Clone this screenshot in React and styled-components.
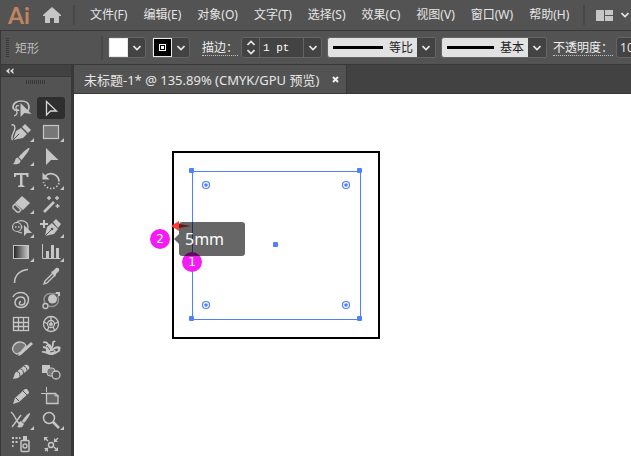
import React from 'react'
import styled, { createGlobalStyle } from 'styled-components'

const GlobalStyle = createGlobalStyle`
  * {
    box-sizing: border-box;
  }
  body {
    margin: 0;
    background: #535353;
    font-family: 'Noto Sans', 'Noto Sans CJK SC', sans-serif;
    font-size: 12px;
    color: #e6e6e6;
  }
  button, input, select {
    font: inherit;
    color: inherit;
    margin: 0;
    padding: 0;
    border: 0;
    background: none;
  }
`

const menus = ['文件(F)', '编辑(E)', '对象(O)', '文字(T)', '选择(S)', '效果(C)', '视图(V)', '窗口(W)', '帮助(H)']

const C = '#c6c6c6'

const Nib = () => (
  <>
    <path d="M8 19l2-9 5-4 6 6-4 5z" fill={C} />
    <path d="M16 5l3-3 5 5-3 4z" fill={C} />
    <path d="M8 19l6-6" stroke="#535353" />
    <circle cx="15" cy="12" r="1.3" fill="#535353" />
  </>
)

const tools = [
  {
    name: '套索工具',
    art: (
      <>
        <path d="M12 13c-3 1-6 0-6-3 0-4 4-6 8-6 5 0 8 2 8 6 0 2-1 4-2 5" fill="none" stroke={C} strokeWidth="1.700" />
        <path d="M12 9c-2-1-3 0-3 2s2 3 3 2M9 13c2 3 1 5-2 6" fill="none" stroke={C} strokeWidth="1.300" />
        <path d="M13.500 6v14l4-4 7 1z" fill={C} />
      </>
    ),
  },
  {
    name: '直接选择工具',
    active: true,
    art: <path d="M9.500 4.500v13.500l4-4h6z" fill="none" stroke="#d8d8d8" strokeWidth="1.300" />,
  },
  {
    name: '曲率工具',
    flag: true,
    art: (
      <>
        <path d="M6 19l3-9 5-3 6 6-4 4z" fill={C} />
        <path d="M15 6l3-3 6 6-3 3z" fill={C} />
        <path d="M6 19l6-6" stroke="#535353" />
        <path d="M4.500 4c3-1 4 2 3 5s-4 7-2 10" fill="none" stroke={C} strokeWidth="1.400" />
      </>
    ),
  },
  {
    name: '矩形工具',
    flag: true,
    art: <rect x="6.500" y="4.500" width="15" height="13" fill="#777" stroke={C} strokeWidth="1.200" />,
  },
  {
    name: '画笔工具',
    flag: true,
    art: (
      <>
        <path d="M22.500 3c1 1-6 10-8 12l-3-3c2-2 9-10 11-9z" fill={C} />
        <path d="M10.500 12.500l3 3c0 4-4 4-8 3.500 3-1 2-6 5-6.500z" fill={C} />
      </>
    ),
  },
  { name: '选择工具', art: <path d="M9 3v17l5-5h7.500z" fill={C} /> },
  {
    name: '文字工具',
    flag: true,
    art: <path d="M7 4h14.500v4h-1.500l-1-2h-3.500v10l2 1v1h-6.500v-1l2-1v-10h-3.500l-1 2h-1.500z" fill={C} />,
  },
  {
    name: '旋转工具',
    flag: true,
    art: (
      <>
        <path d="M8 7.500a8 8 0 0 1 14 5" fill="none" stroke={C} strokeWidth="1.800" />
        <path d="M5.500 3.500v7h7z" fill={C} />
        <path d="M22 14a8 8 0 0 1-15.500-1" fill="none" stroke={C} strokeWidth="1.600" strokeDasharray="1.500 1.800" />
      </>
    ),
  },
  {
    name: '橡皮擦工具',
    flag: true,
    art: (
      <>
        <path d="M15 3l8 7-7 7-8-7z" fill={C} />
        <path d="M8 11l6 6-2 2h-2l-4-4v-2z" fill="none" stroke={C} strokeWidth="1.400" />
      </>
    ),
  },
  {
    name: '魔棒工具',
    art: (
      <>
        <path d="M7 19l10-10" stroke={C} strokeWidth="2.600" />
        <path d="M12 3v4M10 5h4M20 3v4M18 5h4M20.500 11v4M18.500 13h4" stroke={C} strokeWidth="1.400" />
      </>
    ),
  },
  {
    name: '形状生成器工具',
    flag: true,
    art: (
      <>
        <circle cx="10" cy="10" r="4.500" fill="none" stroke={C} strokeWidth="1.200" />
        <path d="M9 6c3-4 12-3 12 4 0 1 0 2-1 3M11 15l4 1" fill="none" stroke={C} strokeWidth="1.200" />
        <path d="M8 10h9" stroke={C} strokeWidth="1.500" strokeDasharray="1.500 1.500" />
        <path d="M17 8v11l3-3h5z" fill={C} />
      </>
    ),
  },
  {
    name: '添加锚点工具',
    flag: true,
    art: (
      <>
        <path d="M7 3v8M3 7h8" stroke={C} strokeWidth="2" />
        <Nib />
      </>
    ),
  },
  {
    name: '渐变工具',
    flag: true,
    art: (
      <>
        <defs>
          <linearGradient id="ramp">
            <stop offset="0" stopColor="#222" />
            <stop offset="1" stopColor="#ccc" />
          </linearGradient>
        </defs>
        <rect x="6.500" y="4.500" width="15" height="13" fill="url(#ramp)" stroke={C} />
      </>
    ),
  },
  {
    name: '柱形图工具',
    flag: true,
    art: (
      <>
        <path d="M5.500 3v14.500h18" fill="none" stroke={C} />
        <path d="M9 10h3v7h-3zM14 4h3v13h-3zM19 7h3v10h-3z" fill={C} />
      </>
    ),
  },
  { name: '弧形工具', art: <path d="M7.500 18c0-7 5-13 13.500-13.500" fill="none" stroke={C} strokeWidth="1.500" /> },
  {
    name: '吸管工具',
    art: (
      <>
        <path d="M8 16l8-8 2 2-8 8-3 1z" fill="none" stroke={C} strokeWidth="1.400" />
        <path d="M14 7l2-1 3-3c2-1 4 1 3 3l-3 3-1 3z" fill={C} />
      </>
    ),
  },
  {
    name: '螺旋线工具',
    art: (
      <path
        d="M6 8c1-3 5-4.500 8-4.500 4 0 7.500 3 7.500 7 0 5-3.500 8-7.500 8-3.500 0-6-2-6-5s2.500-5.500 5.500-5.500 4.500 2 4.500 4.500-2 3.500-4 3.500-2.500-3 0-3.500"
        fill="none"
        stroke={C}
        strokeWidth="1.500"
      />
    ),
  },
  {
    name: '符号移位器工具',
    art: (
      <>
        <path d="M8 14c-3-6 2-11 8-9l6-1-1 4c2 7-4 11-9 9" fill="none" stroke="#929292" strokeWidth="1.500" />
        <circle cx="15.500" cy="10" r="4.500" fill={C} />
        <circle cx="8.500" cy="17" r="2.500" fill="#535353" stroke={C} strokeWidth="1.300" />
        <path d="M19 3h4v4h-2v-2h-2z" fill={C} />
      </>
    ),
  },
  {
    name: '矩形网格工具',
    art: (
      <>
        <rect x="6.500" y="4.500" width="15" height="13" fill="none" stroke={C} strokeWidth="1.300" />
        <path d="M11.500 5v13M16.500 5v13M6.500 9.500h15M6.500 13.500h15" stroke={C} strokeWidth="1.300" />
      </>
    ),
  },
  {
    name: '极坐标网格工具',
    art: (
      <g fill="none" stroke={C} strokeWidth="1.300">
        <circle cx="14" cy="11" r="7.500" />
        <circle cx="14" cy="11" r="3.500" />
        <path d="M14 3v5M7 9l4 2M21 9l-4 2M10 18l2-4M18 18l-2-4M12 11h4M13 13l1-4 1 4" />
      </g>
    ),
  },
  {
    name: '斑点画笔工具',
    art: (
      <>
        <path d="M10 17c-4-1-6-5-3-9 4-5 11-3 12 1l-5 6z" fill="#777" stroke={C} strokeWidth="1.300" />
        <path d="M24 5l2 2-12 11-3 1 1-3z" fill={C} />
      </>
    ),
  },
  {
    name: '变形工具',
    art: (
      <>
        <path
          d="M6 5.500c3-1.500 5 1 6 4M6 10c2 0 4 2 7 2 2 0 3-4 3-6 0-1.500 1.500-2 2-1M5 15c4-1 6 3 10 2 3 0 5-2 8-4M16 12c2-1 5-3 7-1"
          fill="none"
          stroke={C}
          strokeWidth="1.800"
        />
        <path d="M9 8l4-1 3 5 3 2-3 4-7-2z" fill={C} />
        <path d="M10 9l3 4M13 15l4-1" stroke="#535353" />
        <circle cx="22" cy="11.500" r="1.500" fill={C} />
      </>
    ),
  },
  {
    name: 'Shaper 工具',
    art: (
      <>
        <path d="M6 18l2-6 10-8c3-1 5 2 4 4l-11 9z" fill={C} />
        <path d="M10 10.500c2 0 3 2 3 5M13.500 8c2 0 3 2 3 5M17 5.500c2 0 3 2 3 4" fill="none" stroke="#535353" />
      </>
    ),
  },
  {
    name: '混合工具',
    art: (
      <>
        <path d="M5 4h8v8h-8z" fill={C} />
        <rect x="10" y="7" width="8" height="8" rx="3" fill="#777" stroke={C} />
        <circle cx="19" cy="14" r="4" fill="#535353" stroke={C} strokeWidth="1.300" />
      </>
    ),
  },
  {
    name: '铅笔工具',
    art: (
      <>
        <path d="M6 19l2-6 10-9h2l2 3v1l-10 9z" fill={C} />
        <path d="M9 13l3 3M16 6l4 4" stroke="#535353" />
      </>
    ),
  },
  {
    name: '画板工具',
    art: (
      <>
        <path d="M9.500 8.500h9l2.500 2.500v7.500h-11.500z" fill="#666" stroke={C} strokeWidth="1.300" />
        <path d="M9.500 2v5M4 8.500h5M18 8v3h4" fill="none" stroke={C} />
      </>
    ),
  },
  {
    name: '剪刀工具',
    flag: true,
    art: (
      <>
        <path d="M4 3c3 2 4 6 6 9l5 6M5 18l9-12" fill="none" stroke={C} strokeWidth="1.400" />
        <path d="M23 4c1 1-4 8-6 10l-2-2c2-3 7-9 8-8zM14 12l3 3c-1 3-4 4-7 3 2-1 1-5 4-6z" fill={C} />
      </>
    ),
  },
  {
    name: '缩放工具',
    flag: true,
    art: (
      <>
        <circle cx="12" cy="9" r="5.500" fill="none" stroke={C} strokeWidth="1.500" />
        <path d="M16 13l6 6" stroke={C} strokeWidth="2.500" />
      </>
    ),
  },
  {
    name: '符号喷枪工具',
    art: (
      <>
        <rect x="14" y="7.500" width="8" height="11" rx="1" fill="none" stroke={C} strokeWidth="1.500" />
        <path d="M16 3h4v4h-4z" fill={C} />
        <circle cx="18" cy="13" r="2" fill="none" stroke={C} strokeWidth="1.300" />
        <path d="M5 4h2v2h-2zM8.500 4h2v2h-2zM12 4h1.500v2h-1.500zM5 8h2v2h-2zM8.500 8h2v2h-2zM5 12h1.500v2h-1.500z" fill={C} />
      </>
    ),
  },
  {
    name: '符号紧缩器工具',
    art: (
      <>
        <circle cx="14" cy="12" r="2.500" fill="none" stroke={C} strokeWidth="1.500" />
        <path d="M11 8l-3-3M17 9l4-4M11 15l-3 3M17 14l3 3" stroke={C} strokeWidth="1.300" />
        <path d="M7 4h4l-4 4zM17 5v4h4zM11 19v-4h-4zM21 14v4h-4z" fill={C} />
      </>
    ),
  },
]

const Chevron = () => (
  <svg width="8" height="6" viewBox="0 0 8 6" aria-hidden="true">
    <path d="M0.500 1l3.500 3.500 3.500-3.500" fill="none" stroke="#e8e8e8" strokeWidth="1.600" />
  </svg>
)

const ToolButton = ({ tool }) => (
  <Tool type="button" aria-label={tool.name} $active={tool.active}>
    <svg width="28" height="22" viewBox="0 0 28 22" aria-hidden="true">
      {tool.art}
      {tool.flag && <path d="M27 17v4h-4z" fill={C} />}
    </svg>
  </Tool>
)

const StrokeSelect = ({ label, value, length }) => (
  <Profile>
    <Sample $length={length} />
    <ProfileSelect aria-label={label}>
      <option>{value}</option>
    </ProfileSelect>
    <ProfileArrow>
      <Chevron />
    </ProfileArrow>
  </Profile>
)

const App = () => {
  return (
    <Page>
      <GlobalStyle />
      <MenuBar>
        <Logo>Ai</Logo>
        <IconButton type="button" aria-label="主页">
          <svg width="18" height="16" viewBox="0 0 18 16" aria-hidden="true">
            <path d="M9 0l9 8v1h-2v7h-5v-5h-4v5h-5v-7h-2v-1z" fill={C} />
          </svg>
        </IconButton>
        <Divider />
        <Menus>
          {menus.map((m) => (
            <MenuItem type="button" key={m}>{m}</MenuItem>
          ))}
        </Menus>
        <Divider />
        <IconButton type="button" aria-label="排列文档">
          <svg width="17" height="11" viewBox="0 0 17 11" aria-hidden="true">
            <path d="M0 0h8v11h-8zM9 0h8v5h-8zM9 6h8v5h-8z" fill={C} />
          </svg>
          <Chevron />
        </IconButton>
      </MenuBar>

      <ControlBar>
        <SideGrip />
        <Target>矩形</Target>
        <ShortDivider />
        <Swatches>
          <SwatchButton type="button" aria-label="填色">
            <Fill />
            <ArrowCell><Chevron /></ArrowCell>
          </SwatchButton>
          <SwatchButton type="button" aria-label="描边颜色">
            <Fill $dark>
              <svg width="7" height="7" viewBox="0 0 7 7" aria-hidden="true">
                <rect x="0.500" y="0.500" width="6" height="6" fill="none" stroke="#fff" />
                <rect x="2" y="2" width="3" height="3" fill="#fff" />
              </svg>
            </Fill>
            <ArrowCell><Chevron /></ArrowCell>
          </SwatchButton>
        </Swatches>
        <Field>
          <Caption htmlFor="weight">描边：</Caption>
          <Weight>
            <Stepper>
              <button type="button" aria-label="增加">
                <svg width="8" height="6" viewBox="0 0 8 6" aria-hidden="true">
                  <path d="M0.500 5l3.500-3.500 3.500 3.500" fill="none" stroke="#e8e8e8" strokeWidth="1.600" />
                </svg>
              </button>
              <button type="button" aria-label="减少"><Chevron /></button>
            </Stepper>
            <WeightInput id="weight" type="text" defaultValue="1 pt" />
            <ArrowButton type="button" aria-label="描边粗细"><Chevron /></ArrowButton>
          </Weight>
        </Field>
        <Profiles>
          <StrokeSelect label="变量宽度配置文件" value="等比" length={50} />
          <StrokeSelect label="画笔定义" value="基本" length={47} />
        </Profiles>
        <Field>
          <Caption htmlFor="opacity">不透明度：</Caption>
          <OpacityInput id="opacity" type="text" defaultValue="100%" />
        </Field>
      </ControlBar>

      <Workspace>
        <ToolPanel>
          <PanelHead type="button" aria-label="折叠面板">
            <svg width="8" height="6" viewBox="0 0 8 6" aria-hidden="true">
              <path d="M3.500 0v2l-1 1 1 1v2l-3.500-3zM7.500 0v2l-1 1 1 1v2l-3.500-3z" fill="#dcdcdc" />
            </svg>
          </PanelHead>
          <TopGrip />
          <ToolGrid>
            {tools.map((t) => (
              <ToolButton tool={t} key={t.name} />
            ))}
          </ToolGrid>
        </ToolPanel>
        <Document>
          <TabBar>
            <Tab>
              <span>未标题-1* @ 135.89% (CMYK/GPU 预览)</span>
              <CloseButton type="button" aria-label="关闭">
                <svg width="7" height="7" viewBox="0 0 7 7" aria-hidden="true">
                  <path d="M1 1l5 5M6 1l-5 5" stroke="#f0f0f0" strokeWidth="2" />
                </svg>
              </CloseButton>
            </Tab>
          </TabBar>
          <Canvas>
            <Artwork width="208" height="188" viewBox="0 0 208 188" aria-hidden="true">
              <rect x="1" y="1" width="206" height="186" fill="#fff" stroke="#000" strokeWidth="2" />
              <g fill="none" stroke="#4f80ff">
                <rect x="20.500" y="20.500" width="168" height="148" />
                {[[34, 34], [174, 34], [34, 154], [174, 154]].map(([x, y]) => (
                  <g key={`${x}-${y}`}>
                    <circle cx={x} cy={y} r="3.500" strokeWidth="1.200" />
                    <circle cx={x} cy={y} r="1.800" fill="#4f80ff" stroke="none" />
                  </g>
                ))}
              </g>
              <g fill="#4f80ff">
                {[[17, 17], [185, 17], [17, 165], [185, 165], [101, 91]].map(([x, y]) => (
                  <rect key={`${x}-${y}`} x={x} y={y} width="5" height="5" rx="1" />
                ))}
              </g>
              <path d="M-1 75l8-5v3l12 2-12 2v3z" fill="#ff3a35" />
            </Artwork>
            <Badge $x={76} $y={135}>2</Badge>
            <Badge $x={108} $y={158}>1</Badge>
            <Tip>5mm</Tip>
          </Canvas>
        </Document>
      </Workspace>
    </Page>
  )
}

const Page = styled.div`
  min-height: 100vh;
  display: flex;
  flex-direction: column;
  overflow: hidden;
`

const MenuBar = styled.header`
  height: 30px;
  display: flex;
  align-items: center;
  padding-left: 8px;
  overflow: hidden;
`

const Logo = styled.span`
  width: 35px;
  flex: none;
  font-family: Lato, sans-serif;
  font-size: 23px;
  font-weight: 700;
  line-height: 28px;
  color: #c08560;
`

const IconButton = styled.button`
  flex: none;
  display: flex;
  align-items: center;
  gap: 8px;
`

const Divider = styled.span`
  flex: none;
  width: 2px;
  height: 20px;
  margin: 0 11px 0 12px;
  background: #474747;
`

const Menus = styled.nav`
  flex: none;
  display: flex;
  gap: 16px;
  padding: 0 2px 0 4px;
`

const MenuItem = styled.button`
  line-height: 20px;
  white-space: nowrap;
`

const ControlBar = styled.section`
  height: 34px;
  display: flex;
  align-items: center;
  padding-left: 5px;
  border-top: 1px solid #383838;
  border-left: 1px solid #383838;
  overflow: hidden;
`

const SideGrip = styled.span`
  flex: none;
  width: 3px;
  height: 20px;
  background: repeating-linear-gradient(#383838 0 1px, #535353 1px 2px);
`

const Target = styled.span`
  flex: none;
  width: 92px;
  padding-left: 6px;
  color: #bdbdbd;
`

const ShortDivider = styled.span`
  flex: none;
  width: 2px;
  height: 24px;
  background: #474747;
`

const Swatches = styled.div`
  flex: none;
  display: flex;
  gap: 6px;
  padding: 0 12px 0 5px;
`

const SwatchButton = styled.button`
  display: flex;
  width: 38px;
  height: 21px;
  border: 1px solid #646464;
  border-radius: 3px;
  background: #434343;
`

const Fill = styled.span`
  width: 19px;
  height: 19px;
  display: flex;
  align-items: center;
  justify-content: center;
  border: 1px solid #e8e8e8;
  background: ${(p) => (p.$dark ? '#000' : '#fff')};
`

const ArrowCell = styled.span`
  flex: 1;
  height: 19px;
  display: flex;
  align-items: center;
  justify-content: center;
`

const Field = styled.div`
  flex: none;
  display: flex;
  align-items: center;
  gap: 3px;
`

const Caption = styled.label`
  height: 16px;
  line-height: 16px;
  white-space: nowrap;
  color: #f0f0f0;
  border-bottom: 1px dotted #c0c0c0;
`

const Weight = styled.div`
  display: flex;
  height: 21px;
  border: 1px solid #646464;
  border-radius: 3px;
  background: #434343;
`

const Stepper = styled.span`
  width: 18px;
  display: flex;
  flex-direction: column;
  justify-content: center;
  gap: 3px;
  border-right: 1px solid #646464;

  button {
    display: flex;
    justify-content: center;
  }
`

const WeightInput = styled.input`
  width: 43px;
  padding-left: 3px;
  font-family: 'Liberation Mono', monospace;
  font-size: 11px;
  color: #fff;
`

const ArrowButton = styled.button`
  width: 18px;
  display: flex;
  align-items: center;
  justify-content: center;
  border-left: 1px solid #646464;
`

const Profiles = styled.div`
  flex: none;
  display: flex;
  gap: 5px;
  padding: 0 6px 0 5px;
`

const Profile = styled.div`
  display: flex;
  align-items: center;
  height: 21px;
  padding-left: 5px;
  border: 1px solid #646464;
  border-radius: 3px;
  background: #e2e2e2;
  position: relative;
`

const Sample = styled.span`
  width: ${(p) => p.$length}px;
  height: 3px;
  background: #000;
`

const ProfileSelect = styled.select`
  appearance: none;
  width: 52px;
  height: 19px;
  padding-left: 6px;
  color: #222;
`

const ProfileArrow = styled.span`
  position: absolute;
  top: 0;
  right: 0;
  width: 18px;
  height: 19px;
  display: flex;
  align-items: center;
  justify-content: center;
  background: #434343;
  pointer-events: none;
`

const OpacityInput = styled.input`
  width: 48px;
  height: 21px;
  padding-left: 3px;
  border: 1px solid #646464;
  border-radius: 3px;
  background: #434343;
`

const Workspace = styled.main`
  flex: 1;
  display: flex;
`

const ToolPanel = styled.aside`
  flex: none;
  width: 74px;
  display: flex;
  flex-direction: column;
  border: solid #383838;
  border-width: 1px 3px 0 1px;
`

const PanelHead = styled.button`
  height: 12px;
  display: flex;
  align-items: center;
  padding-left: 5px;
  background: #424242;
  border-bottom: 1px solid #383838;
`

const TopGrip = styled.span`
  width: 19px;
  height: 4px;
  margin: 3px 0 13px 25px;
  background: repeating-linear-gradient(90deg, #383838 0 1px, #535353 1px 2px);
`

const ToolGrid = styled.div`
  display: grid;
  grid-template-columns: 28px 28px;
  gap: 2px;
  padding-left: 6px;
`

const Tool = styled.button`
  height: 22px;
  border-radius: 3px;
  background: ${(p) => (p.$active ? '#2e2e2e' : 'transparent')};

  svg {
    display: block;
  }
`

const Document = styled.section`
  flex: 1;
  min-width: 0;
  display: flex;
  flex-direction: column;
`

const TabBar = styled.div`
  height: 30px;
  display: flex;
  background: #424242;
  border: solid #383838;
  border-width: 1px 0;
`

const Tab = styled.div`
  display: flex;
  align-items: center;
  gap: 13px;
  padding: 0 7px 0 10px;
  background: #535353;
  border-right: 1px solid #383838;
  font-size: 13px;
  white-space: nowrap;
`

const CloseButton = styled.button`
  display: flex;
`

const Canvas = styled.div`
  flex: 1;
  position: relative;
  background: #fff;
`

const Artwork = styled.svg`
  position: absolute;
  left: 98px;
  top: 57px;
  overflow: visible;
`

const Badge = styled.span`
  position: absolute;
  left: ${(p) => p.$x}px;
  top: ${(p) => p.$y}px;
  width: 20px;
  height: 20px;
  border-radius: 50%;
  background: #f41cf4;
  color: #fff;
  font-family: 'DejaVu Sans', sans-serif;
  line-height: 20px;
  text-align: center;
`

const Tip = styled.div`
  position: absolute;
  left: 105px;
  top: 128px;
  width: 66px;
  height: 34px;
  padding-left: 6px;
  border-radius: 3px;
  background: rgba(0, 0, 0, 0.6);
  color: #fff;
  font-size: 16px;
  line-height: 34px;

  &::before {
    content: '';
    position: absolute;
    left: -5px;
    top: 12px;
    border: solid transparent;
    border-width: 5px 5px 5px 0;
    border-right-color: rgba(0, 0, 0, 0.6);
  }
`

export default App
